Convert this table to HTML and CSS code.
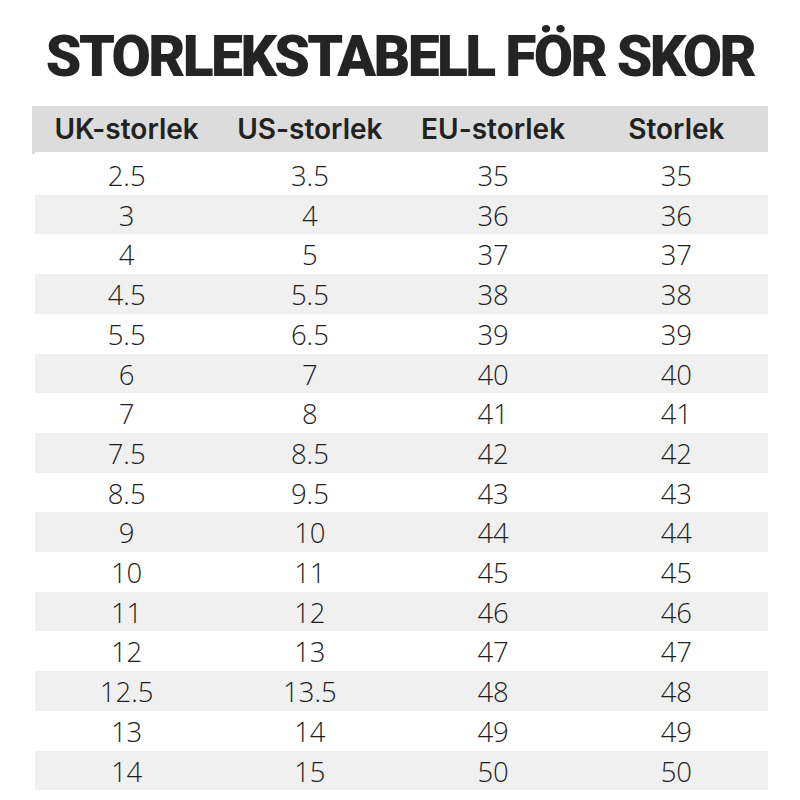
FILE: index.html
```html
<!DOCTYPE html>
<html lang="sv">
<head>
<meta charset="utf-8">
<title>Storlekstabell för skor</title>
<link rel="stylesheet" href="styles.css">
</head>
<body>
<div class="page">
  <h1 class="title">STORLEKSTABELL FÖR SKOR</h1>
  <table class="sizes">
    <thead>
      <tr><th>UK-storlek</th><th>US-storlek</th><th>EU-storlek</th><th>Storlek</th></tr>
    </thead>
    <tbody>
      <tr><td>2.5</td><td>3.5</td><td>35</td><td>35</td></tr>
      <tr><td>3</td><td>4</td><td>36</td><td>36</td></tr>
      <tr><td>4</td><td>5</td><td>37</td><td>37</td></tr>
      <tr><td>4.5</td><td>5.5</td><td>38</td><td>38</td></tr>
      <tr><td>5.5</td><td>6.5</td><td>39</td><td>39</td></tr>
      <tr><td>6</td><td>7</td><td>40</td><td>40</td></tr>
      <tr><td>7</td><td>8</td><td>41</td><td>41</td></tr>
      <tr><td>7.5</td><td>8.5</td><td>42</td><td>42</td></tr>
      <tr><td>8.5</td><td>9.5</td><td>43</td><td>43</td></tr>
      <tr><td>9</td><td>10</td><td>44</td><td>44</td></tr>
      <tr><td>10</td><td>11</td><td>45</td><td>45</td></tr>
      <tr><td>11</td><td>12</td><td>46</td><td>46</td></tr>
      <tr><td>12</td><td>13</td><td>47</td><td>47</td></tr>
      <tr><td>12.5</td><td>13.5</td><td>48</td><td>48</td></tr>
      <tr><td>13</td><td>14</td><td>49</td><td>49</td></tr>
      <tr><td>14</td><td>15</td><td>50</td><td>50</td></tr>
    </tbody>
  </table>
</div>
</body>
</html>
```
FILE: styles.css
```css
html, body {
  margin: 0;
  padding: 0;
  background: #ffffff;
}
.page {
  width: 800px;
  height: 800px;
  overflow: hidden;
  padding-top: 24px;
  box-sizing: border-box;
}
.title {
  margin: 0;
  text-align: center;
  white-space: nowrap;
  font-family: "Roboto", "Noto Sans", sans-serif;
  font-weight: 900;
  font-size: 57px;
  line-height: 66px;
  color: #242424;
  letter-spacing: -2.6px;
}
.sizes {
  margin: 16px 0 0 35px;
  width: 733px;
  border-collapse: collapse;
  table-layout: fixed;
}
.sizes th {
  height: 46px;
  padding: 0;
  background: #dcdcdc;
  border-bottom: 3px solid #ffffff;
  font-family: "Inter", "Noto Sans", sans-serif;
  font-weight: 600;
  font-size: 28px;
  color: #222222;
  text-align: center;
}
.sizes th:first-child {
  box-shadow: -3px 0 0 #dcdcdc;
}
.sizes td {
  height: 36.7px;
  padding: 3px 0 0;
  line-height: 36.7px;
  font-family: "Open Sans", "Noto Sans", sans-serif;
  font-weight: 300;
  font-size: 27.5px;
  color: #1e1e1e;
  text-align: center;
}
.sizes tbody tr:nth-child(even) td {
  background: #f0f0f0;
}
```
